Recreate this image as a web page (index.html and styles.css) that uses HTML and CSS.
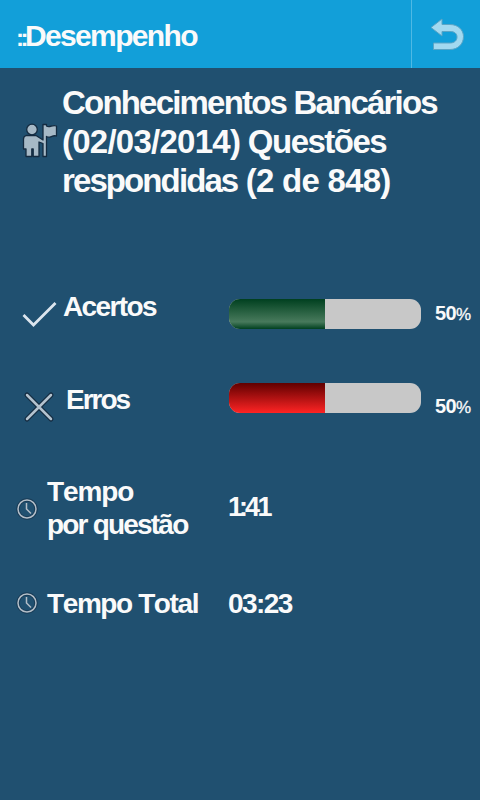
FILE: index.html
```
<!DOCTYPE html>
<html lang="pt-br">
	<head>
		<meta charset="utf-8" />
		<title>Desempenho</title>
		<link rel="stylesheet" href="styles.css">
	</head>

	<body>
	<div class="topo">
		<h1><span class="pontos">::</span>Desempenho</h1>
		<button class="voltar" aria-label="Voltar">
			<svg width="36" height="34" viewBox="0 0 36 34">
				<path d="M1 9.5 L12 1 V6.5 H20 C28 6.5 33.5 12 33.5 18.5 C33.5 26 28 31.5 20 31.5 H3.5 V25 H20 C24.5 25 27 22.5 27 19 C27 15.5 24.5 13.5 20 13.5 H12 V18 Z" />
			</svg>
		</button>
	</div>
	<div class="prova">
		<svg class="bandeira" width="36" height="38" viewBox="0 0 36 38">
			<path d="M4 13.5 H14 L21 18 V2.5 H24.5 V4 C28 6.5 30 2 34.5 4 V14 C30 12.5 28 17 24.5 14.5 V34.5 H21 V21.5 L17 20 V34.5 H11.2 V27 H9.8 V34.5 H4 V27 H1.5 V17 Q1.5 14.5 4 13.5 Z" />
			<circle cx="10" cy="7.5" r="5.3" />
		</svg>
		<h2>
			<span class="linha1">Conhecimentos Bancários</span>
			<span class="linha2"><span class="data">(02/03/2014)</span> Questões</span>
			<span class="linha3"><span class="resp">respondidas</span> (2 de 848)</span>
		</h2>
	</div>
	<div class="linha acertos">
		<svg class="icone" width="36" height="28" viewBox="0 0 36 28">
			<path class="certo" d="M1.5 15 L11.5 25 L33.5 3" />
		</svg>
		<span class="rotulo">Acertos</span>
		<div class="barra"><div class="verde" style="width:50%"></div></div>
		<span class="porcento">50<small>%</small></span>
	</div>
	<div class="linha erros">
		<svg class="icone" width="32" height="32" viewBox="0 0 32 32">
			<path class="sombra" d="M4 4 L28 28 M28 4 L4 28" />
			<path class="xis" d="M4 4 L28 28 M28 4 L4 28" />
		</svg>
		<span class="rotulo">Erros</span>
		<div class="barra"><div class="vermelho" style="width:50%"></div></div>
		<span class="porcento">50<small>%</small></span>
	</div>
	<div class="linha questao">
		<svg class="relogio" width="22" height="22" viewBox="0 0 22 22">
			<circle class="sombra" cx="11" cy="11" r="9" />
			<circle cx="11" cy="11" r="9" />
			<path d="M10.5 5 V11 L15 15.5" />
		</svg>
		<span class="rotulo"><span class="tempo">Tempo</span><br><span class="por">por questão</span></span>
		<span class="valor"><span class="um">1</span><span class="dois">:</span><span class="quatro">4</span>1</span>
	</div>
	<div class="linha total">
		<svg class="relogio" width="22" height="22" viewBox="0 0 22 22">
			<circle class="sombra" cx="11" cy="11" r="9" />
			<circle cx="11" cy="11" r="9" />
			<path d="M10.5 5 V11 L15 15.5" />
		</svg>
		<span class="rotulo">Tempo Total</span>
		<span class="valor">03:23</span>
	</div>
	</body>
</html>
```
FILE: styles.css
```
body{
	margin: 0;
	min-height: 800px;
	background: #205070;
	color: #fafafa;
	font-family: "Liberation Sans", Arial, sans-serif;
	font-weight: bold;
	font-kerning: none;
}
h1,h2{
	margin: 0;
}
.topo{
	display: flex;
	height: 68px;
	background: #129fd9;
}
.topo h1{
	flex: 1;
	padding-left: 16px;
	font-size: 30px;
	line-height: 71px;
	letter-spacing: -1.65px;
}
.pontos{
	font-size: 24px;
	letter-spacing: -3.5px;
}
.voltar{
	width: 69px;
	padding: 4px 0 0 3px;
	border: 0;
	border-left: 1px solid #4fb9e4;
	background: none;
}
.voltar path{
	fill: #a2d9f0;
	stroke: #5aa5c6;
	stroke-width: 1;
}
.prova{
	display: flex;
	height: 132px;
	padding: 15px 0 0 22px;
}
.bandeira{
	margin-top: 39px;
	fill: #a6b9c6;
	stroke: #142b40;
	stroke-width: 1.3;
	stroke-linejoin: round;
}
.prova h2{
	padding-left: 4px;
	font-size: 33px;
	line-height: 39px;
	white-space: nowrap;
}
.linha1,.linha2,.linha3{
	display: block;
}
.linha1{
	letter-spacing: -1.8px;
}
.linha2{
	letter-spacing: -1.5px;
}
.data{
	letter-spacing: -.75px;
}
.linha3{
	letter-spacing: -.75px;
}
.resp{
	letter-spacing: -1.9px;
}
.linha{
	display: grid;
	grid-template-columns: 41px 166px 193px 1fr;
	height: 94px;
	padding-left: 22px;
	font-size: 28px;
	line-height: 33px;
	white-space: nowrap;
}
.acertos{
	padding-top: 75px;
	height: 93px;
}
.erros{
	grid-template-columns: 44px 163px 193px 1fr;
	height: 92px;
}
.questao,.total{
	grid-template-columns: 31px 181px 1fr;
	padding-left: 16px;
}
.questao{
	height: 112px;
}
.icone{
	margin-top: 10px;
}
.erros .icone{
	margin: 8px 0 0 1px;
}
.certo{
	fill: none;
	stroke: #dce5ee;
	stroke-width: 2.8;
}
.xis{
	stroke: #b3c2ce;
	stroke-width: 2.5;
	stroke-linecap: round;
}
.erros .sombra{
	stroke: #142b40;
	stroke-width: 5;
	stroke-linecap: round;
}
.relogio{
	fill: none;
	stroke: #b3bec8;
	stroke-width: 1.5;
}
.relogio .sombra{
	stroke: #183b56;
	stroke-width: 3.5;
}
.questao .relogio{
	margin-top: 23px;
}
.total .relogio{
	margin-top: 5px;
}
.rotulo{
	letter-spacing: -1.6px;
}
.erros .rotulo{
	letter-spacing: -2px;
}
.rotulo .tempo{
	letter-spacing: -1.1px;
}
.rotulo .por{
	letter-spacing: -1.8px;
}
.total .rotulo{
	letter-spacing: -1.4px;
}
.barra{
	width: 192px;
	height: 30px;
	margin-top: 9px;
	border-radius: 11px;
	background: #c8c8c8;
	overflow: hidden;
}
.erros .barra{
	margin-top: 0;
}
.barra div{
	height: 100%;
}
.verde{
	background: linear-gradient(#00401f, #487a5c 76%, #00401f);
}
.vermelho{
	background: linear-gradient(#600000, #ff2424);
}
.porcento{
	padding: 7px 0 0 13px;
	font-size: 20px;
	line-height: 32px;
	letter-spacing: -.6px;
}
.porcento small{
	font-size: 17px;
	font-weight: normal;
	-webkit-text-stroke: .3px #fafafa;
}
.valor{
	letter-spacing: -1.6px;
}
.questao .valor{
	padding-top: 16px;
	font-size: 27px;
}
.um{
	letter-spacing: -4px;
}
.dois{
	letter-spacing: -3px;
}
.quatro{
	letter-spacing: -2.5px;
}
```
